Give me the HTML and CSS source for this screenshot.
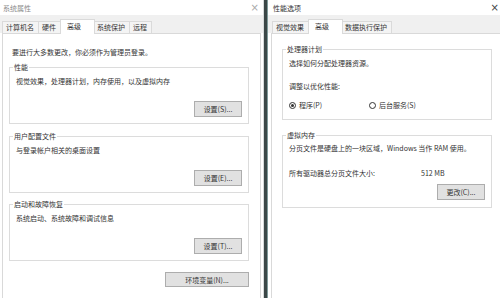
FILE: index.html
```html
<!DOCTYPE html>
<html lang="zh-CN">
<head>
  <meta charset="UTF-8" />
  <meta name="viewport" content="width=device-width, initial-scale=1.0" />
  <title>系统属性 - 性能选项</title>
  <link rel="stylesheet" href="styles.css">
</head>
<body>
  <div class="window window-left">
    <div class="titlebar inactive">
      <span>系统属性</span>
      <span class="close">×</span>
    </div>
    <div class="tabbar">
      <div class="tab">计算机名</div>
      <div class="tab">硬件</div>
      <div class="tab active">高级</div>
      <div class="tab">系统保护</div>
      <div class="tab">远程</div>
    </div>
    <div class="panel">
      <p class="note">要进行大多数更改，你必须作为管理员登录。</p>

      <fieldset class="group">
        <legend>性能</legend>
        <p>视觉效果，处理器计划，内存使用，以及虚拟内存</p>
        <div class="btn-row"><button>设置(S)...</button></div>
      </fieldset>

      <fieldset class="group">
        <legend>用户配置文件</legend>
        <p>与登录帐户相关的桌面设置</p>
        <div class="btn-row"><button>设置(E)...</button></div>
      </fieldset>

      <fieldset class="group">
        <legend>启动和故障恢复</legend>
        <p>系统启动、系统故障和调试信息</p>
        <div class="btn-row"><button>设置(T)...</button></div>
      </fieldset>

      <div class="btn-row env-row"><button class="wide">环境变量(N)...</button></div>
    </div>
  </div>

  <div class="divider"></div>

  <div class="window window-right">
    <div class="titlebar">
      <span>性能选项</span>
      <span class="close">×</span>
    </div>
    <div class="tabbar">
      <div class="tab">视觉效果</div>
      <div class="tab active">高级</div>
      <div class="tab">数据执行保护</div>
    </div>
    <div class="panel">
      <fieldset class="group cpu">
        <legend>处理器计划</legend>
        <p>选择如何分配处理器资源。</p>
        <p class="adjust">调整以优化性能:</p>
        <div class="radios">
          <label class="radio"><span class="dot checked"></span>程序(P)</label>
          <label class="radio"><span class="dot"></span>后台服务(S)</label>
        </div>
      </fieldset>

      <fieldset class="group vm">
        <legend>虚拟内存</legend>
        <p>分页文件是硬盘上的一块区域，Windows 当作 RAM 使用。</p>
        <div class="size-row">
          <span>所有驱动器总分页文件大小:</span>
          <span>512 MB</span>
        </div>
        <div class="btn-row"><button>更改(C)...</button></div>
      </fieldset>
    </div>
  </div>
</body>
</html>
```

FILE: styles.css
```css
body {
  margin: 0;
  width: 500px;
  height: 298px;
  overflow: hidden;
  display: flex;
  background-color: #ffffff;
  font-family: "Noto Sans CJK SC", "Noto Sans", sans-serif;
  font-size: 7px;
  line-height: 10px;
  color: #333;
}

p {
  margin: 0;
}

.window {
  display: flex;
  flex-direction: column;
  flex-shrink: 0;
  background-color: #ffffff;
}

.window-left {
  width: 263px;
}

.window-right {
  width: 240px;
}

.titlebar {
  height: 15px;
  display: flex;
  justify-content: space-between;
  align-items: center;
  padding: 0 4px 0 3px;
  color: #333;
}

.titlebar.inactive {
  color: #8a8a8a;
}

.window-right .titlebar {
  padding-left: 5px;
  padding-right: 9px;
}

.close {
  font-size: 10px;
  font-family: "DejaVu Sans", sans-serif;
  color: #444;
}

.titlebar.inactive .close {
  color: #aaa;
}

.tabbar {
  height: 18px;
  display: flex;
  align-items: flex-end;
  padding-left: 2px;
  background-color: #f0f0f0;
}

.window-right .tabbar {
  padding-left: 4px;
}

.tab {
  height: 11px;
  line-height: 11px;
  padding: 0 4px 0 3px;
  border: 1px solid #dadada;
  border-bottom: none;
  margin-left: -1px;
  background-color: #f4f4f4;
  color: #333;
}

.tab:first-child {
  margin-left: 0;
}

.tab.active {
  position: relative;
  height: 14px;
  line-height: 12px;
  margin: 0 -1px -1px -1px;
  padding: 0 13px 0 6px;
  background-color: #ffffff;
}

.panel {
  flex: 1;
  background-color: #ffffff;
  border: 1px solid #d9d9d9;
  border-bottom: none;
}

.window-left .panel {
  margin: 0 2px;
  padding: 13px 11px 0 6px;
}

.window-right .panel {
  margin: 0 4px 0 3px;
  padding: 10px 11px 0 10px;
}

.note {
  padding-left: 3px;
}

.group {
  margin: 6px 0 0;
  padding: 4px 6px 6px;
  border: 1px solid #dcdcdc;
  min-width: 0;
}

.window-left .group:first-of-type {
  margin-top: 5px;
}

.window-left .group:nth-of-type(2) {
  margin-top: 7px;
}

.group legend {
  padding: 0 1px;
  margin-left: -3px;
  line-height: 10px;
  color: #333;
}

.btn-row {
  display: flex;
  justify-content: flex-end;
  margin-top: 15px;
}

button {
  width: 48px;
  height: 16px;
  padding: 0;
  font-family: inherit;
  font-size: 7px;
  line-height: 10px;
  color: #333;
  background-color: #e1e1e1;
  border: 1px solid #adadad;
}

.env-row {
  margin-top: 11px;
}

button.wide {
  width: 84px;
  height: 15px;
}

/* 性能选项 */

.group.cpu {
  margin-top: 0;
  padding-bottom: 9px;
}

.adjust {
  margin-top: 13px;
}

.radios {
  display: flex;
  margin-top: 9px;
}

.radio {
  display: flex;
  align-items: center;
  gap: 3px;
  width: 80px;
}

.dot {
  width: 5px;
  height: 5px;
  border: 1px solid #333;
  border-radius: 50%;
  display: flex;
  align-items: center;
  justify-content: center;
}

.dot.checked::after {
  content: "";
  width: 3px;
  height: 3px;
  border-radius: 50%;
  background-color: #333;
}

.group.vm {
  margin-top: 10px;
  padding-top: 3px;
  padding-bottom: 7px;
}

.size-row {
  display: grid;
  grid-template-columns: 132px auto;
  margin-top: 15px;
}

.group.vm .btn-row {
  margin-top: 6px;
}

.divider {
  width: 3px;
  flex-shrink: 0;
  background-color: #3b4747;
  border-left: 1px solid #d6dada;
  border-right: 1px solid #7f9a9a;
}
```
